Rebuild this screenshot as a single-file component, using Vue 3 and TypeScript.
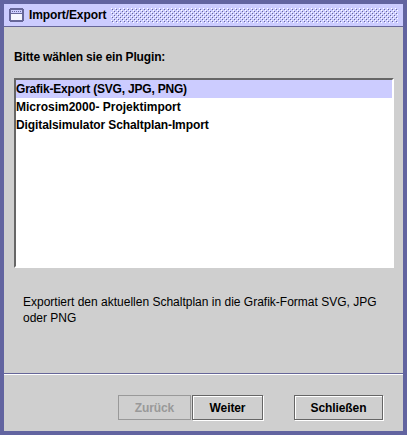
<template>
  <div class="frame">
    <header class="titlebar">
      <svg class="win-icon" width="15" height="14" viewBox="0 0 15 14" shape-rendering="crispEdges">
        <path d="M1 0h13v1h1v12h-1v1H1v-1H0V1h1z" fill="#666699" />
        <rect x="2" y="2" width="11" height="3" fill="#ccccff" />
        <path d="M3 3h1v1H3zM5 3h1v1H5zM7 3h1v1H7zM9 3h1v1H9zM11 3h1v1h-1z" fill="#666699" />
        <rect x="2" y="6" width="11" height="6" fill="#f4f4ff" />
      </svg>
      <span class="title">Import/Export</span>
      <svg class="grip" height="15" shape-rendering="crispEdges">
        <defs>
          <pattern id="bumps" width="4" height="4" patternUnits="userSpaceOnUse">
            <rect x="0" y="0" width="1" height="1" fill="#ffffff" />
            <rect x="2" y="2" width="1" height="1" fill="#ffffff" />
            <rect x="1" y="1" width="1" height="1" fill="#666699" />
            <rect x="3" y="3" width="1" height="1" fill="#666699" />
          </pattern>
        </defs>
        <rect width="100%" height="100%" fill="url(#bumps)" />
      </svg>
    </header>
    <main class="body">
      <p class="prompt">Bitte wählen sie ein Plugin:</p>
      <ul class="list">
        <li
          v-for="(plugin, i) in plugins"
          :key="plugin"
          class="item"
          :class="{ selected: i === 0 }"
        >
          {{ plugin }}
        </li>
      </ul>
      <p class="description">
        Exportiert den aktuellen Schaltplan in die Grafik-Format SVG, JPG<br />oder PNG
      </p>
      <div class="spacer"></div>
      <div class="separator"></div>
      <footer class="buttons">
        <button class="btn back" disabled>Zurück</button>
        <button class="btn next">Weiter</button>
        <button class="btn close">Schließen</button>
      </footer>
    </main>
  </div>
</template>

<script setup lang="ts">
const plugins: string[] = [
  'Grafik-Export (SVG, JPG, PNG)',
  'Microsim2000- Projektimport',
  'Digitalsimulator Schaltplan-Import',
];
</script>

<style>
html,
body {
  margin: 0;
  padding: 0;
}
</style>

<style scoped>
.frame {
  width: 407px;
  height: 435px;
  box-sizing: border-box;
  border: 4px solid #6264a0;
  background: #cfcfcf;
  display: flex;
  flex-direction: column;
  font-family: 'Liberation Sans', Arial, sans-serif;
  font-size: 12px;
  color: #000;
}

.titlebar {
  height: 23px;
  box-sizing: border-box;
  background: #ccccff;
  border-bottom: 1px solid #666699;
  display: flex;
  align-items: center;
  padding: 0 5px 0 5px;
}

.win-icon {
  flex: none;
}

.title {
  font-weight: bold;
  letter-spacing: -0.1px;
  margin-left: 5px;
  margin-right: 5px;
}

.grip {
  flex: 1;
  min-width: 0;
  margin-top: 1px;
}

.body {
  flex: 1;
  display: flex;
  flex-direction: column;
  min-height: 0;
}

.prompt {
  margin: 23px 0 0 10px;
  font-weight: bold;
  letter-spacing: -0.15px;
  line-height: 14px;
}

.list {
  list-style: none;
  margin: 14px 9px 0 10px;
  padding: 0;
  height: 190px;
  box-sizing: border-box;
  background: #fff;
  border-top: 2px solid #666666;
  border-left: 2px solid #666666;
  border-right: 2px solid #fff;
  border-bottom: 2px solid #fff;
}

.item {
  font-weight: bold;
  line-height: 18px;
  height: 18px;
  white-space: nowrap;
}

.item:nth-child(1) {
  letter-spacing: -0.2px;
}

.item:nth-child(3) {
  letter-spacing: -0.1px;
}

.selected {
  background: #ccccff;
}

.description {
  margin: 26px 0 0 19px;
  line-height: 16px;
}

.spacer {
  flex: 1;
}

.separator {
  height: 1px;
  background: #666699;
  border-bottom: 1px solid #fff;
}

.buttons {
  display: flex;
  padding: 20px 0 11px 114px;
}

.btn {
  height: 25px;
  padding: 0;
  margin: 0;
  box-sizing: border-box;
  font: bold 12px 'Liberation Sans', Arial, sans-serif;
  letter-spacing: -0.1px;
  color: #000;
  background: #cfcfcf;
  border: 1px solid #666666;
  box-shadow: 1px 1px 0 #fff, inset 1px 1px 0 #fff;
}

.back {
  width: 73px;
  color: #999999;
  border-color: #999999;
  box-shadow: none;
}

.next {
  width: 71px;
  margin-left: 1px;
}

.close {
  width: 89px;
  margin-left: 31px;
}
</style>
